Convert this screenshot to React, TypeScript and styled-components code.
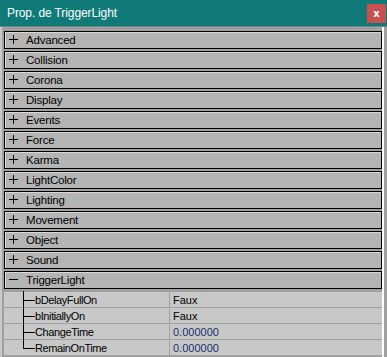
import styled, { createGlobalStyle } from "styled-components";

const Global = createGlobalStyle`
  html, body {
    margin: 0;
    padding: 0;
    background: #a0a0a0;
  }
  * {
    box-sizing: border-box;
  }
`;

const Window = styled.div`
  width: 387px;
  height: 357px;
  display: flex;
  flex-direction: column;
  background: #a0a0a0;
  font-family: "Liberation Sans", Arial, sans-serif;
  overflow: hidden;
`;

const TitleBar = styled.header`
  height: 27px;
  flex: none;
  background: #0f7a78;
  display: flex;
  align-items: center;
  justify-content: space-between;
  padding: 0 1px 0 7px;
  border-bottom: 1px solid #6f8584;
`;

const Title = styled.span`
  color: #ffffff;
  font-size: 12px;
  letter-spacing: -0.1px;
`;

const CloseButton = styled.button`
  width: 19px;
  height: 19px;
  margin-top: 1px;
  border: none;
  padding: 0;
  background: #c75050;
  color: #ffffff;
  font-family: "DejaVu Sans", sans-serif;
  font-weight: bold;
  font-size: 10px;
  line-height: 17px;
  display: flex;
  align-items: center;
  justify-content: center;
`;

const Body = styled.div`
  flex: 1;
  display: flex;
  flex-direction: column;
  gap: 2px;
  padding: 4px 1px 0 4px;
  border-left: 2px solid #c8c8c8;
  border-right: 3px solid #a0a0a0;
  box-shadow: inset -2px 0 0 #ffffff;
  background: #a0a0a0;
`;

const Category = styled.div`
  height: 18px;
  flex: none;
  display: flex;
  align-items: center;
  margin-left: -2px;
  margin-right: 1px;
  background: #b4b4b4;
  border: 1px solid #000000;
  box-shadow: inset 1px 1px 0 #d8d8d8;
  font-size: 11.5px;
  letter-spacing: -0.2px;
  color: #000000;
`;

const Toggle = styled.span`
  width: 17px;
  height: 16px;
  flex: none;
  position: relative;
  margin-left: 2px;
  margin-right: 2px;
`;

const Bar = styled.span<{ $vertical?: boolean }>`
  position: absolute;
  background: #000000;
  ${(p) =>
    p.$vertical
      ? "left: 6px; top: 3px; width: 1px; height: 9px;"
      : "left: 2px; top: 7px; width: 9px; height: 1px;"}
`;

const Properties = styled.div`
  display: flex;
  flex-direction: column;
  margin-left: -2px;
  margin-top: 1px;
  margin-right: 1px;
  background: #c8c8c8;
`;

const PropRow = styled.div`
  height: 16px;
  display: grid;
  grid-template-columns: 166px 1fr;
  border-bottom: 1px solid #a0a0a0;
  font-size: 11px;
`;

const NameCell = styled.div<{ $last?: boolean }>`
  position: relative;
  display: flex;
  align-items: center;
  padding-left: 31px;
  border-right: 1px solid #a0a0a0;
  color: #000000;
  letter-spacing: -0.4px;

  &::before {
    content: "";
    position: absolute;
    left: 19px;
    top: -1px;
    width: 1px;
    height: ${(p) => (p.$last ? "9px" : "17px")};
    background: #000000;
  }
  &::after {
    content: "";
    position: absolute;
    left: 19px;
    top: 8px;
    width: 12px;
    height: 1px;
    background: #000000;
  }
`;

const ValueCell = styled.div<{ $numeric?: boolean }>`
  display: flex;
  align-items: center;
  padding-left: 3px;
  color: ${(p) => (p.$numeric ? "#1a2f6e" : "#000000")};
`;

const categories = [
  "Advanced",
  "Collision",
  "Corona",
  "Display",
  "Events",
  "Force",
  "Karma",
  "LightColor",
  "Lighting",
  "Movement",
  "Object",
  "Sound",
];

const props = [
  { name: "bDelayFullOn", value: "Faux" },
  { name: "bInitiallyOn", value: "Faux" },
  { name: "ChangeTime", value: "0.000000", numeric: true },
  { name: "RemainOnTime", value: "0.000000", numeric: true },
];

export default function App() {
  return (
    <>
      <Global />
      <Window>
        <TitleBar>
          <Title>Prop. de TriggerLight</Title>
          <CloseButton>x</CloseButton>
        </TitleBar>
        <Body>
          {categories.map((c) => (
            <Category key={c}>
              <Toggle>
                <Bar />
                <Bar $vertical />
              </Toggle>
              {c}
            </Category>
          ))}
          <Category>
            <Toggle>
              <Bar />
            </Toggle>
            TriggerLight
          </Category>
          <Properties>
            {props.map((p, i) => (
              <PropRow key={p.name}>
                <NameCell $last={i === props.length - 1}>{p.name}</NameCell>
                <ValueCell $numeric={p.numeric}>{p.value}</ValueCell>
              </PropRow>
            ))}
          </Properties>
        </Body>
      </Window>
    </>
  );
}
